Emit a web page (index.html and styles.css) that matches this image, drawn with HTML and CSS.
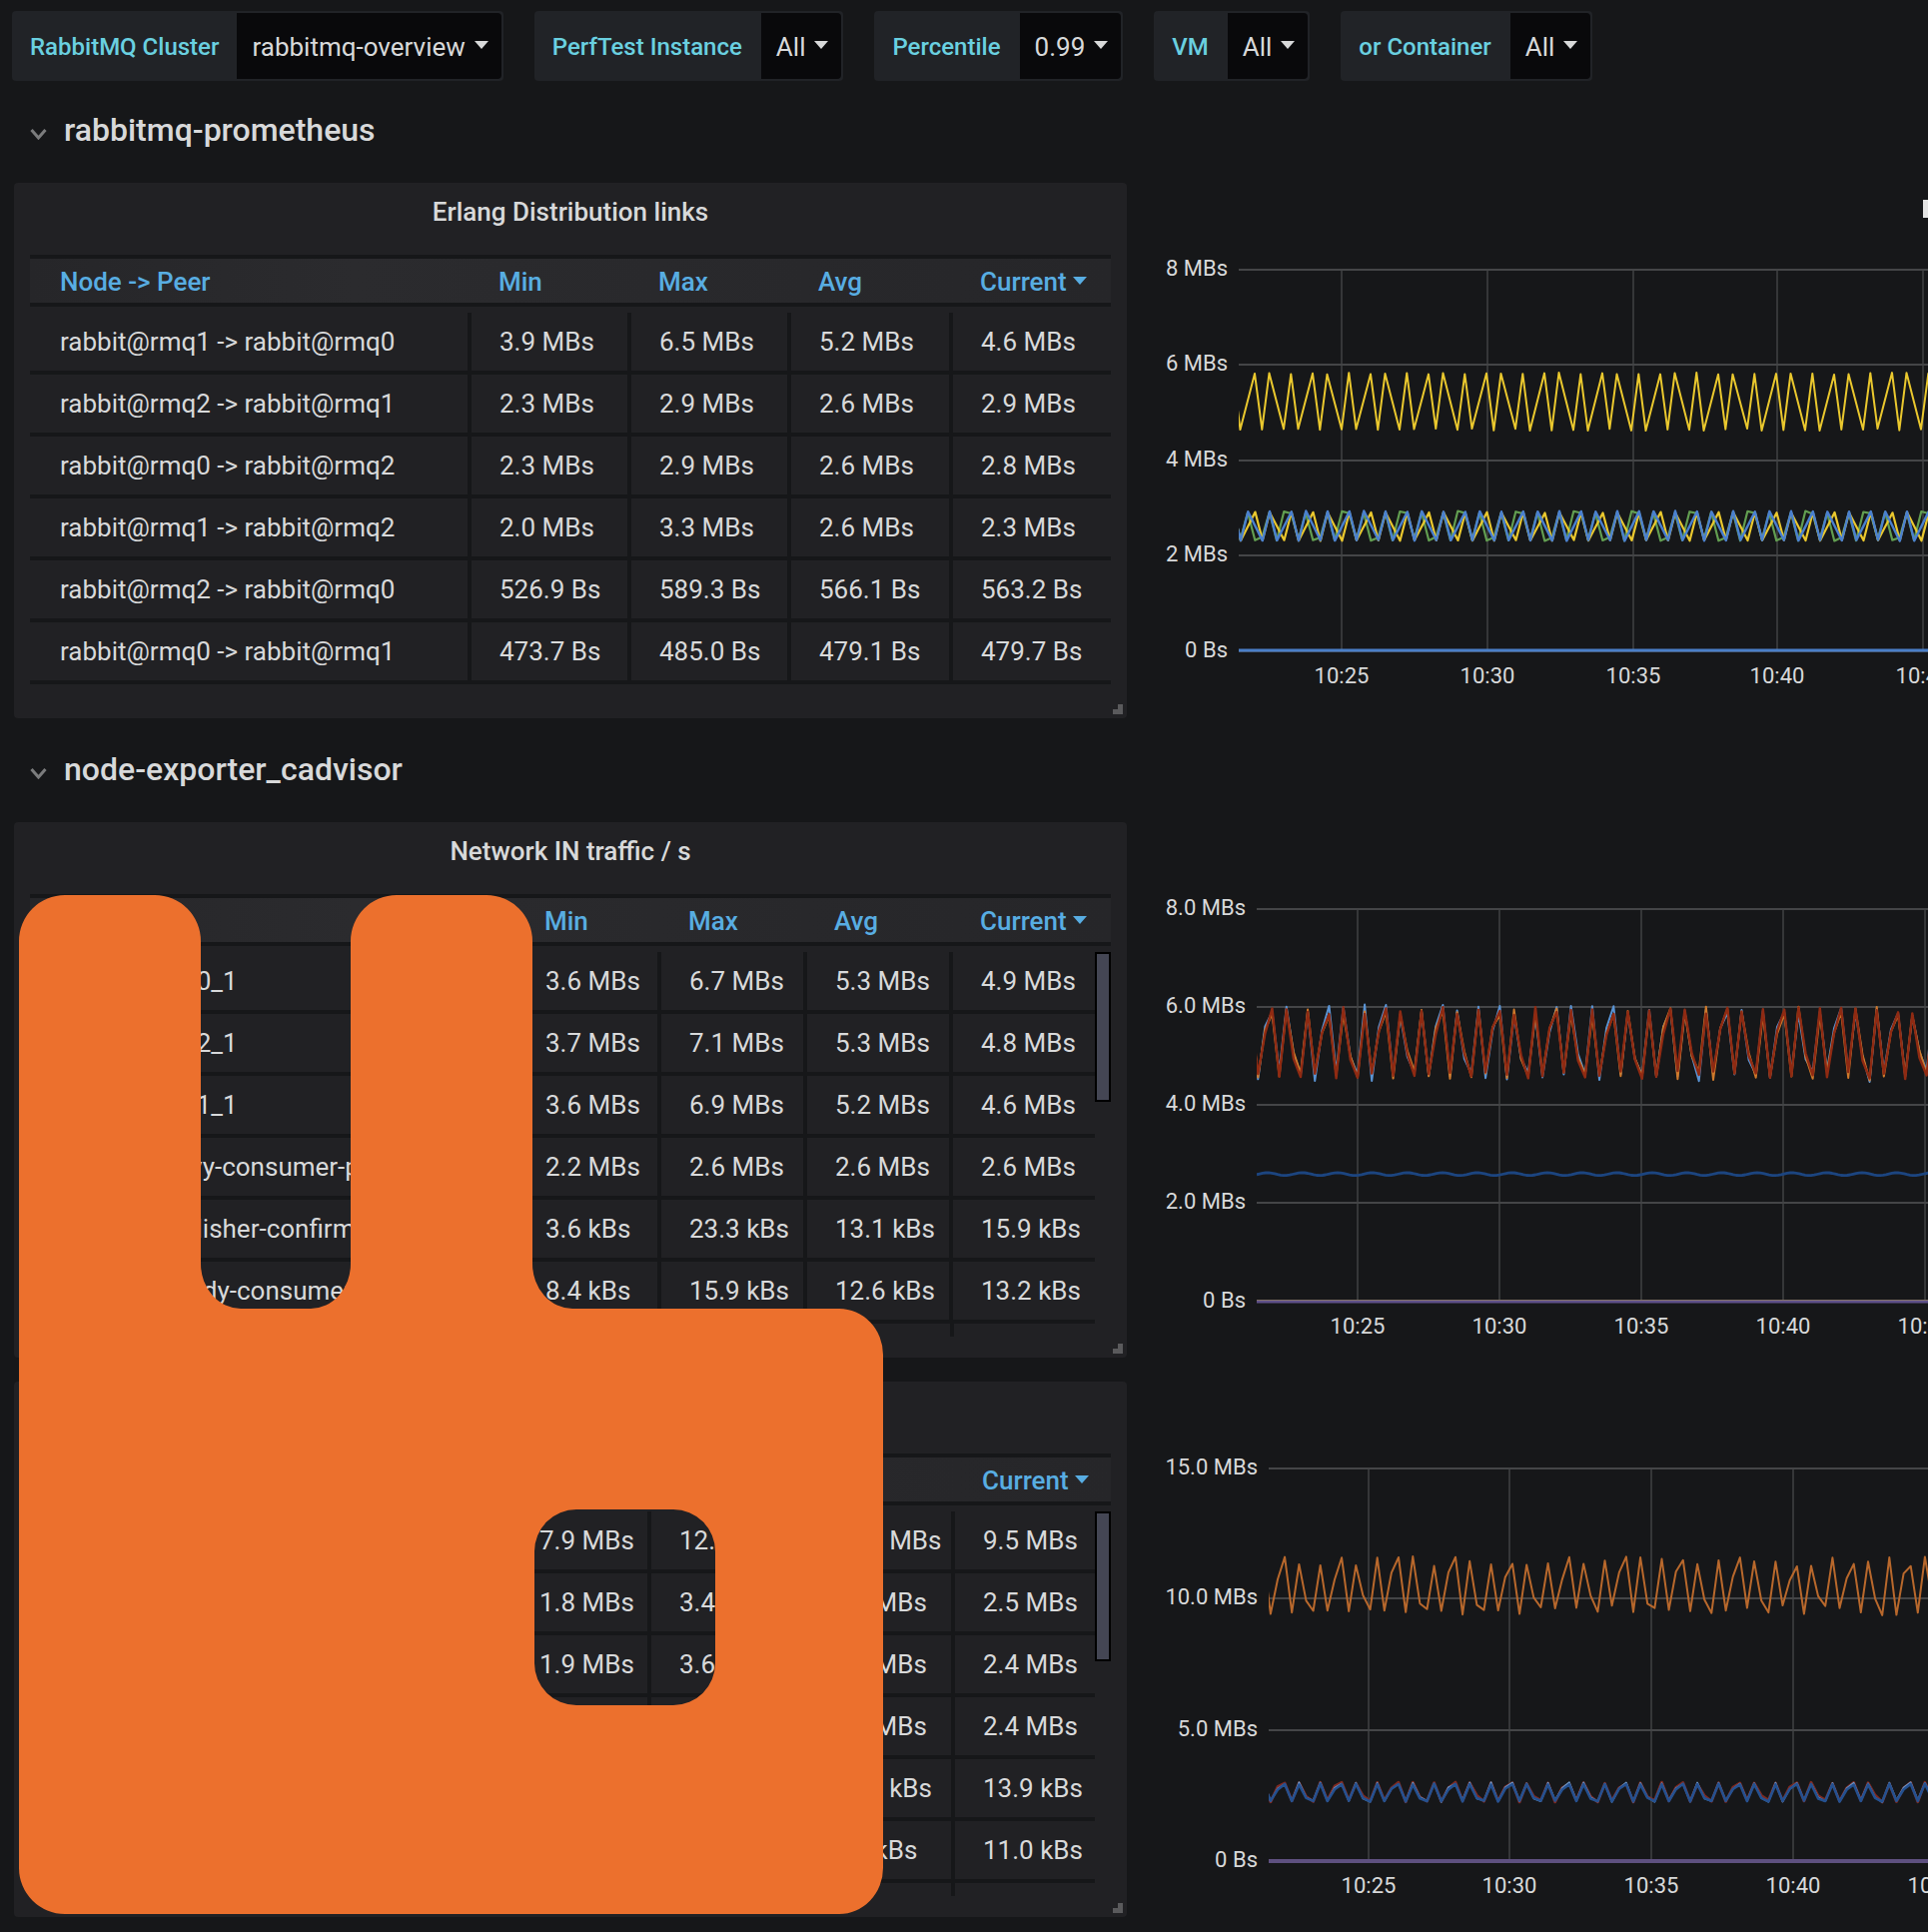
FILE: index.html
```html
<!DOCTYPE html>
<html lang="en">
<head>
    <meta charset="UTF-8">
    <title>RabbitMQ-Overview - Grafana</title>
    <link rel="stylesheet" href="styles.css">
</head>
<body>
    <!-- template variables -->
    <div class="filters">
        <div class="filter"><span class="filter-label">RabbitMQ Cluster</span><span class="filter-value">rabbitmq-overview<i class="caret"></i></span></div>
        <div class="filter"><span class="filter-label">PerfTest Instance</span><span class="filter-value">All<i class="caret"></i></span></div>
        <div class="filter"><span class="filter-label">Percentile</span><span class="filter-value">0.99<i class="caret"></i></span></div>
        <div class="filter"><span class="filter-label">VM</span><span class="filter-value">All<i class="caret"></i></span></div>
        <div class="filter"><span class="filter-label">or Container</span><span class="filter-value">All<i class="caret"></i></span></div>
    </div>

    <h2 class="row-title"><svg class="chevron" viewBox="0 0 18 12"><path d="M2 2l7 8 7-8"/></svg>rabbitmq-prometheus</h2>

    <div class="dash-row">
        <div class="panel cols-links">
            <div class="panel-title">Erlang Distribution links</div>
            <div class="table-head">
                <span>Node -&gt; Peer</span><span>Min</span><span>Max</span><span>Avg</span><span>Current<i class="caret"></i></span>
            </div>
            <div class="table-body">
                <div class="table-row"><span>rabbit@rmq1 -&gt; rabbit@rmq0</span><span>3.9 MBs</span><span>6.5 MBs</span><span>5.2 MBs</span><span>4.6 MBs</span></div>
                <div class="table-row"><span>rabbit@rmq2 -&gt; rabbit@rmq1</span><span>2.3 MBs</span><span>2.9 MBs</span><span>2.6 MBs</span><span>2.9 MBs</span></div>
                <div class="table-row"><span>rabbit@rmq0 -&gt; rabbit@rmq2</span><span>2.3 MBs</span><span>2.9 MBs</span><span>2.6 MBs</span><span>2.8 MBs</span></div>
                <div class="table-row"><span>rabbit@rmq1 -&gt; rabbit@rmq2</span><span>2.0 MBs</span><span>3.3 MBs</span><span>2.6 MBs</span><span>2.3 MBs</span></div>
                <div class="table-row"><span>rabbit@rmq2 -&gt; rabbit@rmq0</span><span>526.9 Bs</span><span>589.3 Bs</span><span>566.1 Bs</span><span>563.2 Bs</span></div>
                <div class="table-row"><span>rabbit@rmq0 -&gt; rabbit@rmq1</span><span>473.7 Bs</span><span>485.0 Bs</span><span>479.1 Bs</span><span>479.7 Bs</span></div>
            </div>
            <i class="resize-handle"></i>
        </div>
        <svg class="chart" id="chart-links"></svg>
    </div>

    <h2 class="row-title"><svg class="chevron" viewBox="0 0 18 12"><path d="M2 2l7 8 7-8"/></svg>node-exporter_cadvisor</h2>

    <div class="dash-row">
        <div class="panel cols-in">
            <div class="panel-title">Network IN traffic / s</div>
            <div class="table-head">
                <span>Container</span><span>Min</span><span>Max</span><span>Avg</span><span>Current<i class="caret"></i></span>
            </div>
            <div class="table-body scrolling">
                <div class="table-row"><span>docker_rmq0_1</span><span>3.6 MBs</span><span>6.7 MBs</span><span>5.3 MBs</span><span>4.9 MBs</span></div>
                <div class="table-row"><span>docker_rmq2_1</span><span>3.7 MBs</span><span>7.1 MBs</span><span>5.3 MBs</span><span>4.8 MBs</span></div>
                <div class="table-row"><span>docker_rmq1_1</span><span>3.6 MBs</span><span>6.9 MBs</span><span>5.2 MBs</span><span>4.6 MBs</span></div>
                <div class="table-row"><span>classic-heavy-consumer-publisher</span><span>2.2 MBs</span><span>2.6 MBs</span><span>2.6 MBs</span><span>2.6 MBs</span></div>
                <div class="table-row"><span>stream_publisher-confirms</span><span>3.6 kBs</span><span>23.3 kBs</span><span>13.1 kBs</span><span>15.9 kBs</span></div>
                <div class="table-row"><span>stream_steady-consumer</span><span>8.4 kBs</span><span>15.9 kBs</span><span>12.6 kBs</span><span>13.2 kBs</span></div>
                <div class="table-row"></div>
                <i class="scrollbar"></i>
            </div>
            <i class="resize-handle"></i>
        </div>
        <svg class="chart" id="chart-in"></svg>
    </div>

    <div class="dash-row next-panel">
        <div class="panel cols-out">
            <div class="panel-title">Network OUT traffic / s</div>
            <div class="table-head">
                <span>Container</span><span>Min</span><span>Max</span><span>Avg</span><span>Current<i class="caret"></i></span>
            </div>
            <div class="table-body scrolling">
                <div class="table-row"><span>docker_rmq0_1</span><span>7.9 MBs</span><span>12.1 MBs</span><span>10.1 MBs</span><span>9.5 MBs</span></div>
                <div class="table-row"><span>docker_rmq2_1</span><span>1.8 MBs</span><span>3.4 MBs</span><span>2.5 MBs</span><span>2.5 MBs</span></div>
                <div class="table-row"><span>docker_rmq1_1</span><span>1.9 MBs</span><span>3.6 MBs</span><span>2.5 MBs</span><span>2.4 MBs</span></div>
                <div class="table-row"><span>classic-heavy-consumer-publisher</span><span>1.9 MBs</span><span>3.4 MBs</span><span>2.5 MBs</span><span>2.4 MBs</span></div>
                <div class="table-row"><span>stream_publisher-confirms</span><span>3.2 kBs</span><span>22.6 kBs</span><span>12.4 kBs</span><span>13.9 kBs</span></div>
                <div class="table-row"><span>stream_steady-consumer</span><span>6.8 kBs</span><span>14.2 kBs</span><span>9.9 kBs</span><span>11.0 kBs</span></div>
                <div class="table-row"></div>
                <i class="scrollbar"></i>
            </div>
            <i class="resize-handle"></i>
        </div>
        <svg class="chart" id="chart-out"></svg>
    </div>

    <!-- logo laid over the tables -->
    <svg class="logo" viewBox="18 895 867 1022">
        <path fill-rule="evenodd" d="M19 942A46 46 0 0 1 65 896H155A46 46 0 0 1 201 942V1265A40 45 0 0 0 241 1310H311A40 45 0 0 0 351 1265V942A46 46 0 0 1 397 896H487A46 46 0 0 1 533 942V1265A40 45 0 0 0 573 1310H840A44 46 0 0 1 884 1356V1870A44 46 0 0 1 840 1916H65A46 46 0 0 1 19 1870Z M577 1511H674A42 42 0 0 1 716 1553V1665A42 42 0 0 1 674 1707H577A42 42 0 0 1 535 1665V1553A42 42 0 0 1 577 1511Z"/>
    </svg>

    <script src="charts.js"></script>
</body>
</html>
```

FILE: styles.css
```css
* {
    box-sizing: border-box;
}

body {
    position: relative;
    margin: 0;
    width: 1930px;
    height: 1934px;
    overflow: hidden;
    background-color: #161719;
    color: #d8d9da;
    font-family: Roboto, "Liberation Sans", sans-serif;
    font-size: 26px;
}

.caret {
    display: inline-block;
    border-top: 8px solid currentColor;
    border-left: 7px solid transparent;
    border-right: 7px solid transparent;
    margin-left: 9px;
    vertical-align: middle;
    position: relative;
    top: -2px;
}

/* template variables */
.filters {
    display: flex;
    gap: 31px;
    height: 81px;
    padding: 11px 0 0 12px;
}

.filter {
    display: flex;
    height: 70px;
    padding: 2px 2px 2px 0;
    background-color: #212327;
    border-radius: 4px;
}

.filter-label {
    display: flex;
    align-items: center;
    padding: 2px 19px 0 18px;
    color: #6ad0e0;
    font-size: 24px;
    font-weight: 500;
}

.filter:first-child .filter-label {
    padding-right: 18px;
}

.filter-value {
    display: flex;
    align-items: center;
    padding: 2px 13px 0 15px;
    background-color: #09090b;
    border-radius: 0 4px 4px 0;
}

/* dashboard rows */
.row-title {
    display: flex;
    align-items: center;
    gap: 16px;
    height: 102px;
    margin: 0;
    padding: 0 0 4px 29px;
    font-size: 32px;
    font-weight: 500;
}

.dash-row + .row-title {
    margin-top: 2px;
}

.chevron {
    width: 19px;
    height: 12px;
    margin-top: 8px;
    fill: none;
    stroke: #7b7c7d;
    stroke-width: 3;
}

.dash-row {
    display: flex;
    padding-left: 14px;
}

.next-panel {
    margin-top: 24px;
}

.panel {
    position: relative;
    flex: none;
    width: 1114px;
    height: 536px;
    padding: 0 16px;
    background-color: #212124;
    border-radius: 4px;
    overflow: hidden;
}

.panel-title {
    height: 72px;
    padding-top: 12px;
    line-height: 34px;
    text-align: center;
    font-weight: 500;
}

.table-head,
.table-row {
    display: grid;
}

.cols-links .table-head,
.cols-links .table-row {
    grid-template-columns: 442px 160px 160px 162px 1fr;
}

.cols-in .table-head,
.cols-in .table-row {
    grid-template-columns: 488px 144px 146px 146px 1fr;
}

.cols-out .table-head,
.cols-out .table-row {
    grid-template-columns: 482px 140px 153px 151px 1fr;
}

.table-head {
    height: 52px;
    align-items: center;
    background-color: #29292c;
    background-image: linear-gradient(90deg, #262629, #2b2b2e 30%, #262629);
    border-top: 4px solid #161719;
    border-bottom: 4px solid #161719;
    color: #58ade2;
    font-weight: 500;
}

.table-head span {
    padding: 1px 0 0 27px;
}

.table-head span:first-child {
    padding-left: 30px;
}

.table-head .caret {
    margin-left: 6px;
    top: -3px;
}

.table-body {
    position: relative;
    margin-top: 6px;
}

.scrolling {
    height: 385px;
    padding-right: 16px;
    overflow: hidden;
}

.table-row {
    height: 62px;
    border-bottom: 4px solid #161719;
}

.table-row span {
    padding-left: 28px;
    line-height: 58px;
    white-space: nowrap;
    overflow: hidden;
    border-right: 4px solid #161719;
}

.table-row span:first-child {
    padding-left: 30px;
}

.table-row span:last-child {
    border-right: 0;
}

/* the row cut off by the scroll area only shows its column lines */
.table-row:empty {
    border-bottom: 0;
    background-image:
        linear-gradient(#161719, #161719),
        linear-gradient(#161719, #161719);
    background-repeat: no-repeat;
    background-size: 4px 100%;
}

.cols-in .table-row:empty {
    background-position: 921px 0, 775px 0;
}

.cols-out .table-row:empty {
    background-position: 922px 0, 619px 0;
}

.scrollbar {
    position: absolute;
    top: 0;
    right: 0;
    width: 16px;
    height: 150px;
    background-color: #444654;
    border: 2px solid #000;
}

.resize-handle {
    position: absolute;
    right: 4px;
    bottom: 4px;
    width: 10px;
    height: 10px;
    border-right: 5px solid #5a5a5c;
    border-bottom: 5px solid #5a5a5c;
}

/* graphs, drawn by charts.js */
.chart {
    flex: none;
    width: 802px;
    height: 536px;
}

.chart-grid {
    stroke: #444547;
    fill: none;
}

.chart-line {
    fill: none;
    stroke-linejoin: round;
}

.chart-label {
    fill: #d8d9da;
    font-size: 22px;
    dominant-baseline: central;
}

.chart-label.y-axis {
    text-anchor: end;
}

.chart-label.x-axis {
    text-anchor: middle;
}

.chart-mark {
    fill: #e4e4e4;
}

/* logo */
.logo {
    position: absolute;
    left: 18px;
    top: 895px;
    width: 867px;
    height: 1022px;
    fill: #ec702d;
}
```

FILE: charts.js
```js
// Draws the three graphs with made up but repeatable samples.
var NS = "http://www.w3.org/2000/svg";

function add(svg, tag, attrs, text) {
    var el = document.createElementNS(NS, tag);
    for (var key in attrs) {
        el.setAttribute(key, attrs[key]);
    }
    if (text) {
        el.textContent = text;
    }
    svg.appendChild(el);
    return el;
}

function random(seed) {
    return function () {
        seed = (seed * 16807) % 2147483647;
        return seed / 2147483647 - 0.5;
    };
}

// pattern is [[step, y], ...] and repeats every `period` steps
function keyPoints(start, step, period, pattern, jitter, seed) {
    var rnd = random(seed);
    var points = [];
    for (var n = -1; start + n * period * step < 1960; n++) {
        for (var i = 0; i < pattern.length; i++) {
            var x = start + (n * period + pattern[i][0]) * step;
            var y = pattern[i][1] + rnd() * jitter;
            points.push(x.toFixed(1) + "," + y.toFixed(1));
        }
    }
    return points.join(" ");
}

// the up and down beat of the first graph
function saw(high, low) {
    return [[0, low], [2, high], [3, low], [4, high], [6, low], [7, high]];
}

// same beat with the shoulders seen in the network graphs
function beat(peak, midHigh, midLow, low) {
    return [[0, low], [1, peak], [2, low], [3, midHigh], [4, peak], [5, low], [6, peak], [7, midLow]];
}

function wave(left, y, size, length) {
    var points = [];
    for (var x = left; x < 1940; x += 3) {
        points.push(x + "," + (y - size * Math.sin(x / length * 2 * Math.PI)).toFixed(1));
    }
    return points.join(" ");
}

function drawChart(id, c) {
    var svg = document.getElementById(id);
    svg.setAttribute("viewBox", "1128 " + c.top + " 802 536");

    var clip = add(add(svg, "defs", {}), "clipPath", { id: id + "-clip" });
    add(clip, "rect", { x: c.left, y: c.top, width: 802, height: c.zero - c.top + 3 });

    c.yTicks.forEach(function (tick) {
        add(svg, "line", { class: "chart-grid", x1: c.left, x2: 1930, y1: tick[0], y2: tick[0], "stroke-width": 2 });
        add(svg, "text", { class: "chart-label y-axis", x: c.left - 11, y: tick[0] - 2 }, tick[1]);
    });
    c.xTicks.forEach(function (x, i) {
        add(svg, "line", { class: "chart-grid", x1: x, x2: x, y1: c.yTicks[0][0], y2: c.zero, "stroke-width": 1.4 });
        add(svg, "text", { class: "chart-label x-axis", x: x, y: c.zero + 24 }, "10:" + (25 + i * 5));
    });

    var plot = add(svg, "g", { "clip-path": "url(#" + id + "-clip)" });
    c.series.forEach(function (s) {
        add(plot, "polyline", { class: "chart-line", stroke: s.color, points: s.points, "stroke-width": s.width || 2 });
    });
}

var s1 = 7.25;
drawChart("chart-links", {
    top: 183, left: 1240, zero: 652,
    yTicks: [[270, "8 MBs"], [365, "6 MBs"], [461, "4 MBs"], [556, "2 MBs"], [652, "0 Bs"]],
    xTicks: [1343, 1489, 1635, 1779, 1925],
    series: [
        { color: "#eac82e", points: keyPoints(1241.5, s1, 8, saw(374, 430), 2, 11) },
        { color: "#629e51", width: 2.2, points: keyPoints(1285.3, s1, 8, [[0, 512], [1, 514], [2, 540], [3, 513], [4, 541], [5, 538], [6, 513], [7, 541]], 1, 23) },
        { color: "#eac82e", width: 2.2, points: keyPoints(1242, s1, 8, saw(513, 541), 1, 37) },
        { color: "#4a80cf", width: 2.4, points: keyPoints(1220.3, s1, 8, saw(512, 541), 1, 51) },
        { color: "#4a7fc8", width: 3, points: "1240,651 1930,651" }
    ]
});

var s2 = 7.12;
drawChart("chart-in", {
    top: 823, left: 1258, zero: 1303,
    yTicks: [[910, "8.0 MBs"], [1008, "6.0 MBs"], [1106, "4.0 MBs"], [1204, "2.0 MBs"], [1303, "0 Bs"]],
    xTicks: [1359, 1501, 1643, 1785, 1927],
    series: [
        { color: "#5a94d4", points: keyPoints(1302, s2, 8, beat(1011, 1030, 1056, 1077), 12, 5) },
        { color: "#cf7a2b", points: keyPoints(1302, s2, 8, beat(1012, 1030, 1056, 1077), 10, 71) },
        { color: "#8f2a12", width: 2.4, points: keyPoints(1302, s2, 8, beat(1012, 1032, 1058, 1076), 8, 113) },
        { color: "#1c4580", width: 2.8, points: wave(1258, 1175.3, 1.4, 35) },
        { color: "#a8944a", width: 1, points: "1258,1301.5 1930,1301.5" },
        { color: "#5e5088", width: 3, points: "1258,1303 1930,1303" }
    ]
});

drawChart("chart-out", {
    top: 1383, left: 1270, zero: 1863,
    yTicks: [[1470, "15.0 MBs"], [1600, "10.0 MBs"], [1732, "5.0 MBs"], [1863, "0 Bs"]],
    xTicks: [1370, 1511, 1653, 1795, 1937],
    series: [
        { color: "#b8682c", points: keyPoints(1314.6, s2, 8, beat(1563, 1578, 1602, 1612), 10, 17) },
        { color: "#7f2a22", width: 2.8, points: keyPoints(1314.6, s2, 8, beat(1785, 1789, 1798, 1803), 2, 29) },
        { color: "#6f9bcc", width: 1.6, points: keyPoints(1314.6, s2, 8, beat(1785, 1790, 1800, 1803), 2, 43) },
        { color: "#24508f", width: 2.6, points: keyPoints(1314.6, s2, 8, beat(1786, 1791, 1800, 1803), 1, 61) },
        { color: "#5e5080", width: 4, points: "1270,1863 1930,1863" }
    ]
});

add(document.getElementById("chart-links"), "rect", { class: "chart-mark", x: 1925, y: 200, width: 5, height: 18 });
```
